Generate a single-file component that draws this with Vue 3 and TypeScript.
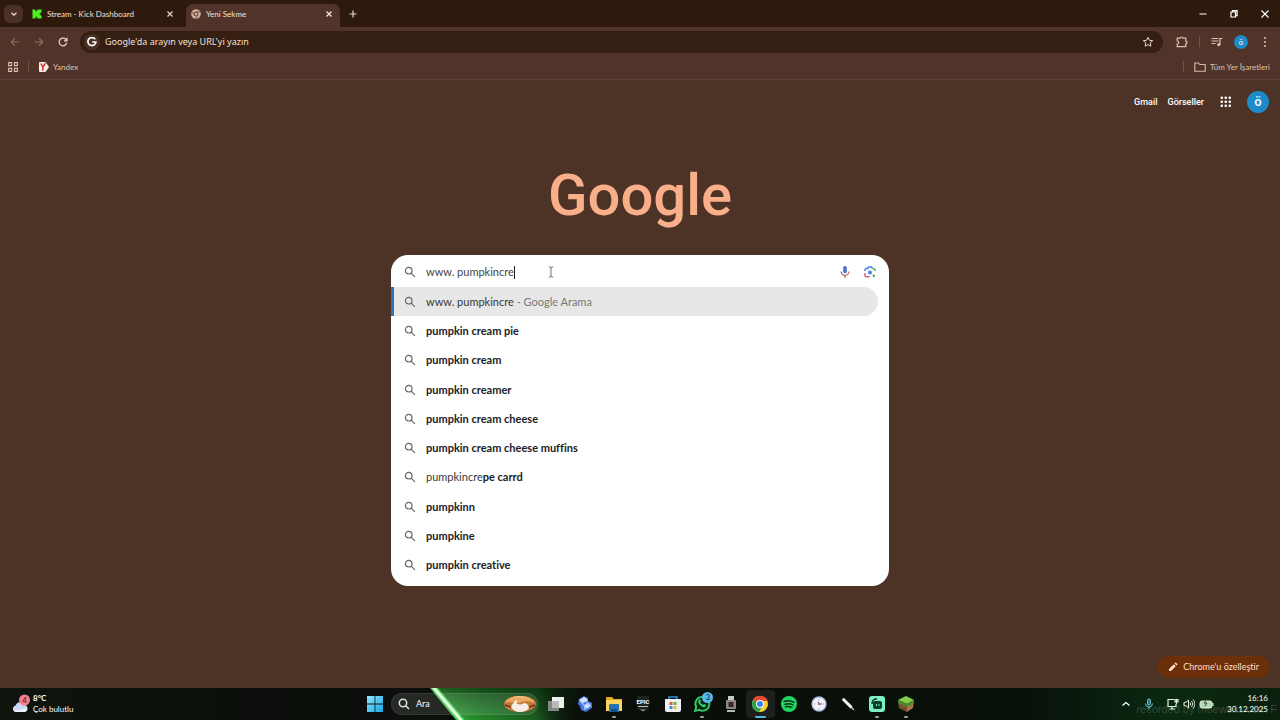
<script setup lang="ts">
import { ref } from 'vue'

interface Suggestion {
  typed: string
  completion: string
  source?: string
}

interface TaskbarApp {
  id: string
  label: string
  running?: boolean
  active?: boolean
}

const query = ref('www. pumpkincre')
const address = ref('')

const suggestions: Suggestion[] = [
  { typed: 'www. pumpkincre', completion: '', source: 'Google Arama' },
  { typed: '', completion: 'pumpkin cream pie' },
  { typed: '', completion: 'pumpkin cream' },
  { typed: '', completion: 'pumpkin creamer' },
  { typed: '', completion: 'pumpkin cream cheese' },
  { typed: '', completion: 'pumpkin cream cheese muffins' },
  { typed: 'pumpkincre', completion: 'pe carrd' },
  { typed: '', completion: 'pumpkinn' },
  { typed: '', completion: 'pumpkine' },
  { typed: '', completion: 'pumpkin creative' },
]

const apps: TaskbarApp[] = [
  { id: 'desktops', label: 'Görev Görünümü' },
  { id: 'copilot', label: 'Copilot' },
  { id: 'files', label: 'Dosya Gezgini', running: true },
  { id: 'epic', label: 'Epic Games' },
  { id: 'store', label: 'Microsoft Store' },
  { id: 'whatsapp', label: 'WhatsApp', running: true },
  { id: 'device', label: 'Aygıt' },
  { id: 'chrome', label: 'Google Chrome', active: true },
  { id: 'spotify', label: 'Spotify' },
  { id: 'clock', label: 'Saat' },
  { id: 'pen', label: 'Kalem' },
  { id: 'stream', label: 'Yayın', running: true },
  { id: 'block', label: 'Oyun', running: true },
]
</script>

<template>
  <div class="screen">
    <header class="browser">
      <div class="tabs">
        <button class="tab-search" aria-label="Sekme ara">
          <svg width="8" height="8" viewBox="0 0 8 8"><path d="M1.500 2.800 4 5.200 6.500 2.800" fill="none" stroke="#f3dccf" stroke-width="1.300" /></svg>
        </button>
        <div class="tab">
          <svg width="10" height="10" viewBox="0 0 10 10"><path d="M0.500 0.500h3v2h1v-1h1v-1h4v3h-1v1h-1v1h1v1h1v3h-4v-1h-1v-1h-1v2h-3z" fill="#4cf321" /></svg>
          <span class="tab-title">Stream - Kick Dashboard</span>
          <button class="tab-close" aria-label="Kapat">
            <svg width="8" height="8" viewBox="0 0 8 8"><path d="m1.500 1.500 5 5m0-5-5 5" stroke="#ecd6ca" stroke-width="1.200" /></svg>
          </button>
        </div>
        <div class="tab tab-active">
          <svg width="10" height="10" viewBox="0 0 10 10">
            <circle cx="5" cy="5" r="4.800" fill="#cfae9e" />
            <path d="M5 2.800h4.300M3.200 6.100 1 2.500M6.800 6.200 4.600 9.600" stroke="#503429" stroke-width=".7" />
            <circle cx="5" cy="5" r="2.300" fill="#503429" />
            <circle cx="5" cy="5" r="1.500" fill="#d8b7a7" />
          </svg>
          <span class="tab-title">Yeni Sekme</span>
          <button class="tab-close" aria-label="Kapat">
            <svg width="8" height="8" viewBox="0 0 8 8"><path d="m1.500 1.500 5 5m0-5-5 5" stroke="#f6e4da" stroke-width="1.300" /></svg>
          </button>
        </div>
        <button class="new-tab" aria-label="Yeni sekme">
          <svg width="10" height="10" viewBox="0 0 10 10"><path d="M5 1.500v7M1.500 5h7" stroke="#ecd6ca" stroke-width="1.200" /></svg>
        </button>
        <div class="window-controls">
          <button aria-label="Simge durumuna küçült"><svg width="10" height="10" viewBox="0 0 10 10"><path d="M1.500 5h7" stroke="#fff" /></svg></button>
          <button aria-label="Geri yükle"><svg width="10" height="10" viewBox="0 0 10 10"><path d="M2 3h4.500v5H2zM3.500 3V1.700h4.600v4.900H6.500" fill="none" stroke="#fff" stroke-width="1.200" /></svg></button>
          <button aria-label="Pencereyi kapat"><svg width="10" height="10" viewBox="0 0 10 10"><path d="m1.500 1.500 7 7m0-7-7 7" stroke="#fff" stroke-width="1.100" /></svg></button>
        </div>
      </div>

      <div class="toolbar">
        <button class="nav dim" aria-label="Geri"><svg width="10" height="10" viewBox="0 0 10 10"><path d="M9.300 5H1.200M5 1.200 1.200 5 5 8.800" fill="none" stroke="currentColor" stroke-width="1.100" /></svg></button>
        <button class="nav dim" aria-label="İleri"><svg width="10" height="10" viewBox="0 0 10 10"><path d="M.7 5h8.100M5 1.200 8.800 5 5 8.800" fill="none" stroke="currentColor" stroke-width="1.100" /></svg></button>
        <button class="nav" aria-label="Yenile"><svg width="10" height="10" viewBox="0 0 10 10"><path d="M8.700 5.800A3.800 3.800 0 1 1 7.600 2.200L8.800 3.500M9 .8v3H6" fill="none" stroke="currentColor" stroke-width="1.200" /></svg></button>
        <div class="omnibox">
          <span class="g-mark">
            <svg width="10" height="10" viewBox="0 0 10 10"><path d="M8.200 2.300A4 4 0 1 0 8.900 5H5.200" fill="none" stroke="#fff" stroke-width="1.700" /></svg>
          </span>
          <input v-model="address" aria-label="Adres çubuğu" placeholder="Google'da arayın veya URL'yi yazın" />
          <button class="star" aria-label="Yer işareti ekle">
            <svg width="12" height="12" viewBox="0 0 12 12"><path d="m6 1.300 1.400 3 3.300.4-2.500 2.200.7 3.300L6 8.600l-2.900 1.600.7-3.300L1.300 4.700l3.300-.4z" fill="none" stroke="#ecd6ca" stroke-width="1" /></svg>
          </button>
        </div>
        <div class="actions">
          <button aria-label="Uzantılar"><svg width="12" height="12" viewBox="0 0 12 12"><path d="M1.200 2.200h2.900a1.400 1.200 0 0 1 2.800 0h2.900v3a1.200 1.300 0 0 1 0 2.600v2.900H1.200V8a1.500 1.500 0 0 0 0-3z" fill="none" stroke="currentColor" stroke-width="1.200" /></svg></button>
          <i class="divider"></i>
          <button aria-label="Medya denetimi"><svg width="12" height="12" viewBox="0 0 12 12"><path d="M.5 2.500h7M.5 5h7M.5 7.500h4M9 8.500v-6h2.500" fill="none" stroke="currentColor" stroke-width="1.200" /><circle cx="7.800" cy="8.600" r="1.600" fill="currentColor" /></svg></button>
          <button class="avatar avatar-small" aria-label="Profil">ö</button>
          <button aria-label="Menü"><svg width="12" height="12" viewBox="0 0 12 12" fill="currentColor"><circle cx="6" cy="2" r="1" /><circle cx="6" cy="6" r="1" /><circle cx="6" cy="10" r="1" /></svg></button>
        </div>
      </div>

      <nav class="bookmarks">
        <button class="grid-button" aria-label="Sekme grupları"><svg width="10" height="10" viewBox="0 0 10 10"><path d="M.6.6h3v3h-3zM6.400.6h3v3h-3zM.6 6.400h3v3h-3zM6.400 6.400h3v3h-3z" fill="none" stroke="#d9bcae" stroke-width="1.100" /></svg></button>
        <i class="divider"></i>
        <a class="bookmark" href="#">
          <svg width="10" height="10" viewBox="0 0 10 10"><path d="M0 1q0-1 1-1h5.500L10 5l-3.500 5H1Q0 10 0 9z" fill="#f6eee9" /><path d="m1.800 1.500 2 3.500v3.800M6.300 1.200 3.800 5.500" fill="none" stroke="#dc3030" stroke-width="1.500" /></svg>
          Yandex
        </a>
        <i class="divider push"></i>
        <a class="bookmark all" href="#">
          <svg width="12" height="10" viewBox="0 0 12 10"><path d="M.8 1h3.700l1.200 1.500h5.500v6.700H.8z" fill="none" stroke="#d9bcae" stroke-width="1.100" /></svg>
          Tüm Yer İşaretleri
        </a>
      </nav>
    </header>

    <main class="page">
      <div class="account">
        <a href="#">Gmail</a>
        <a href="#">Görseller</a>
        <button class="launcher" aria-label="Google uygulamaları">
          <svg width="12" height="12" viewBox="0 0 12 12" fill="#fff"><template v-for="r in 3" :key="r"><rect v-for="c in 3" :key="c" :x="c * 4 - 3.500" :y="r * 4 - 3.500" width="2.500" height="2.500" rx="1" /></template></svg>
        </button>
        <button class="avatar avatar-large" aria-label="Google hesabı">ö</button>
      </div>

      <h1 class="logo">Google</h1>

      <form class="search-card" role="search" @submit.prevent>
        <div class="search-row">
          <svg class="lens" width="12" height="12" viewBox="0 0 12 12"><circle cx="4.700" cy="4.700" r="3.300" /><path d="m7.200 7.200 3.700 3.700" /></svg>
          <div class="field">
            <input v-model="query" type="text" aria-label="Google'da arayın" />
            <i class="caret"></i>
            <svg class="pointer" width="6" height="12" viewBox="0 0 6 12"><path d="M.8.800Q3 .8 3 2.200v7.600Q3 11.200.8 11.200M5.200.8Q3 .8 3 2.200m0 7.600q0 1.400 2.200 1.400" fill="none" stroke="#666" stroke-width=".9" /></svg>
          </div>
          <button type="button" aria-label="Sesle arama">
            <svg width="12" height="14" viewBox="0 0 12 14"><rect x="4.200" y="1" width="3.600" height="7.200" rx="1.800" fill="#4772cf" /><path d="M2.200 6.500q.2 3.800 3.800 3.800" fill="none" stroke="#a55687" stroke-width="1.200" /><path d="M9.800 6.500q-.2 3.800-3.800 3.800" fill="none" stroke="#da675c" stroke-width="1.200" /><path d="M6 10.300v2.400" stroke="#bd624c" stroke-width="1.300" /></svg>
          </button>
          <button type="button" aria-label="Görselle arama">
            <svg width="12" height="12" viewBox="0 0 12 12" fill="none" stroke-width="1.500"><path d="M1 5V4q0-1.600 1.600-1.600h1.200L4.500 1h3l.7 1.400" stroke="#4285f4" /><path d="M8.200 2.400h1.200Q11 2.400 11 4v1" stroke="#53ae71" /><path d="M1 7v2.200q0 1.600 1.600 1.600h3" stroke="#cb6177" /><circle cx="6" cy="6.500" r="2" fill="#4285d9" /><circle cx="9.800" cy="9.800" r="1.200" fill="#45a163" /></svg>
          </button>
        </div>
        <ul class="suggestions">
          <li v-for="(item, index) in suggestions" :key="index" :class="{ selected: index === 0 }">
            <svg class="lens" width="12" height="12" viewBox="0 0 12 12"><circle cx="4.700" cy="4.700" r="3.300" /><path d="m7.200 7.200 3.700 3.700" /></svg>
            <span>{{ item.typed }}<b v-if="item.completion">{{ item.completion }}</b><em v-if="item.source"> - {{ item.source }}</em></span>
          </li>
        </ul>
      </form>

      <button class="customize">
        <svg width="10" height="10" viewBox="0 0 10 10"><path d="M1 9V7l4.800-4.800 2 2L3 9zM6.500 1.500l.8-.8q.4-.3.800 0l1.200 1.200q.4.400 0 .8l-.8.800z" fill="#ffdfc9" /></svg>
        Chrome'u özelleştir
      </button>
    </main>

    <footer class="taskbar">
      <svg class="beam" width="180" height="32" viewBox="0 0 180 32" aria-hidden="true">
        <defs>
          <linearGradient id="glow"><stop offset="0" stop-color="#3fb541" /><stop offset=".3" stop-color="#248a2b" /><stop offset=".7" stop-color="#1b5c1f" /><stop offset="1" stop-color="#0b1c0c" stop-opacity="0" /></linearGradient>
          <linearGradient id="shade" x2="0" y2="1"><stop stop-color="#061a08" stop-opacity=".55" /><stop offset="1" stop-color="#061a08" stop-opacity="0" /></linearGradient>
        </defs>
        <path d="M36 0h144v32H62z" fill="url(#glow)" />
        <path d="M36 0h144v32H62z" fill="url(#shade)" />
        <path d="M30 0h8l27 32h-9z" fill="#4bc94e" />
        <path d="M32 0h4l27 32h-4z" fill="#dcffdc" />
      </svg>
      <button class="weather">
        <svg width="20" height="20" viewBox="0 0 20 20"><path d="M5 18a3.300 3.300 0 0 1-.4-6.500 4.600 4.600 0 0 1 8.500-.7A3.700 3.700 0 0 1 14 18z" fill="#cad8f5" /><path d="M2 15q2 2 6 1t8-2q0 4-3 4H5q-2 0-3-3" fill="#eef3ff" /><circle cx="13.500" cy="6" r="5.500" fill="#f27f8e" /><text x="13.500" y="9" text-anchor="middle" font-size="8" fill="#3b1018">4</text></svg>
        <span><b>8°C</b><br />Çok bulutlu</span>
      </button>

      <div class="dock">
        <button class="start" aria-label="Başlat">
          <svg width="16" height="16" viewBox="0 0 16 16"><defs><linearGradient id="win" x2="1" y2="1"><stop stop-color="#8ce6fc" /><stop offset="1" stop-color="#19a5e6" /></linearGradient></defs><path d="M0 0h7.600v7.600H0zM8.400 0H16v7.600H8.400zM0 8.400h7.600V16H0zM8.400 8.400H16V16H8.400z" fill="url(#win)" /></svg>
        </button>
        <button class="task-search">
          <svg width="12" height="12" viewBox="0 0 12 12"><circle cx="5" cy="5" r="3.700" fill="none" stroke="#dce8dc" stroke-width="1.500" /><path d="m7.700 7.700 3.300 3.300" stroke="#dce8dc" stroke-width="1.600" /></svg>
          Ara
          <svg class="bun" width="34" height="18" viewBox="0 0 34 18"><ellipse cx="17" cy="9" rx="16" ry="8" fill="#c57938" /><path d="M2 8Q5 1 17 1t15 7q-7-3-13-1-4 2-8 1-4-2-9 0z" fill="#e9a964" /><path d="M10 2q8-2 16 1-8-1-16-1" fill="#f6d2a2" /><path d="M8 12q2-5 5-4 4 3 8 0 4 0 5 5-3 4-9 4t-9-5" fill="#f5eee8" /><path d="M13 5q-3 3-1 5l2-4" fill="#fff" /><path d="m2 10 6 2m18 0 6-2" stroke="#6d321b" stroke-width="1.500" /></svg>
        </button>
        <div class="apps">
          <button v-for="app in apps" :key="app.id" :class="{ active: app.active, running: app.running }" :aria-label="app.label">
            <svg v-if="app.id === 'desktops'" width="18" height="18" viewBox="0 0 18 18"><path d="M5 2h12v11H5z" fill="#eef0ee" /><path d="M1 6h11v10H1z" fill="#858785" /><path d="M5 6h7v7H5z" fill="#b9bbb9" /></svg>
            <svg v-else-if="app.id === 'copilot'" width="18" height="18" viewBox="0 0 18 18"><path d="m3 4 5-3 4 2v3l4 2v5l-6 4-5-2-1-4-2-2z" fill="#4477e1" /><path d="m3 5 5-3 3 2v2L7 8zM8 10l5-2 2 3-5 3z" fill="#d5e4ff" /><path d="m4 6 4 4 1 5M11 4v5l3 2" fill="none" stroke="#a8c8ff" stroke-width="1.200" /></svg>
            <svg v-else-if="app.id === 'files'" width="18" height="18" viewBox="0 0 18 18"><path d="M1 2h6l2 2h8v12H1z" fill="#e8a824" /><path d="M1 5h16v11H1z" fill="#ffd45b" /><path d="M4 10q0-1 1-1h8q1 0 1 1v7H4z" fill="#2271b5" /><path d="M6 14h6v3H6z" fill="#174d80" /></svg>
            <svg v-else-if="app.id === 'epic'" width="14" height="16" viewBox="0 0 14 16"><path d="M1 0h12v13l-6 3-6-3z" fill="#202220" /><text class="epic" x="7" y="8" text-anchor="middle" fill="#fff">EPIC</text><path d="M2 10.500h10M5 13.500l2 1 2-1" fill="none" stroke="#b9bdb9" /></svg>
            <svg v-else-if="app.id === 'store'" width="18" height="18" viewBox="0 0 18 18"><path d="M5 5V2h8v3" fill="none" stroke="#3292df" stroke-width="1.500" /><path d="M1 4h16v11q0 2-2 2H3q-2 0-2-2z" fill="#edf1f3" /><path d="M5.500 7h3v3h-3z" fill="#e75535" /><path d="M9.500 7h3v3h-3z" fill="#71af38" /><path d="M5.500 11h3v3h-3z" fill="#2e9ad5" /><path d="M9.500 11h3v3h-3z" fill="#edb935" /></svg>
            <template v-else-if="app.id === 'whatsapp'">
              <svg width="18" height="18" viewBox="0 0 18 18"><path d="m2 16 1.200-4A7 7 0 1 1 6 14.900z" fill="#0d2513" stroke="#29cf66" stroke-width="1.900" /><path d="M6 5q-2 2 1 5t5 2l1-2-2-1-1 1q-2-1-3-3l1-1-1-2z" fill="#2bda6c" /></svg>
              <span class="count">3</span>
            </template>
            <svg v-else-if="app.id === 'device'" width="12" height="18" viewBox="0 0 12 18"><path d="M3 1h6v5H3z" fill="#c9c9c9" /><rect x="1" y="5" width="10" height="9" rx="1" fill="#8a8a8a" /><rect x="3.500" y="7" width="5" height="5" fill="#432421" /><path d="M2 15h8v2H2z" fill="#b5b5b5" /></svg>
            <svg v-else-if="app.id === 'chrome'" width="18" height="18" viewBox="0 0 18 18"><circle cx="9" cy="9" r="8" fill="#f9cb2d" /><path d="M9 9 2 5A8 8 0 0 1 16.500 6H9z" fill="#e94838" /><path d="M9 9 2.100 5a8 8 0 0 0 5.800 11.900l3.500-6z" fill="#27a354" /><circle cx="9" cy="9" r="4" fill="#fff" /><circle cx="9" cy="9" r="3" fill="#3c83ec" /></svg>
            <svg v-else-if="app.id === 'spotify'" width="16" height="16" viewBox="0 0 16 16"><circle cx="8" cy="8" r="8" fill="#1ed760" /><path d="M3 5.400q5.500-1.600 10 .9M4 8.200q4.500-1.200 8 .8M4.500 10.700q3.500-.8 6.300.8" fill="none" stroke="#0b2914" stroke-width="1.400" stroke-linecap="round" /></svg>
            <svg v-else-if="app.id === 'clock'" width="16" height="16" viewBox="0 0 16 16"><circle cx="8" cy="8" r="7" fill="#f0f1fa" stroke="#aab5d5" stroke-width="1.300" /><path d="M8 3v1M8 12v1M3 8h1M12 8h1" stroke="#8791ab" /><path d="M8 8h3M8 8 7 5.500" stroke="#4a5874" /><circle cx="8" cy="8" r="1" fill="#c84252" /></svg>
            <svg v-else-if="app.id === 'pen'" width="14" height="14" viewBox="0 0 14 14"><path d="m1.500 1.500 10 10 1.500 1.500" stroke="#bbb" stroke-width="1.500" /><path d="m2 2 8.500 8.500" stroke="#f4f4f4" stroke-width="3" /></svg>
            <svg v-else-if="app.id === 'stream'" width="18" height="18" viewBox="0 0 18 18"><rect x="1" y="1" width="16" height="16" rx="3" fill="#7cf0c3" /><rect x="5" y="6" width="9" height="8" rx="2" fill="#10392f" /><path d="M4 9q0-5 5-5" fill="none" stroke="#10392f" stroke-width="1.500" /><path d="M8.500 9v2M11 9v2" stroke="#7cf0c3" /></svg>
            <svg v-else width="18" height="18" viewBox="0 0 18 18"><path d="m1 5 8-4 8 4-7 4z" fill="#82ce49" /><path d="m1 5 9 4v8l-8-4z" fill="#79502f" /><path d="m10 9 7-4-1 8-6 4z" fill="#a6754a" /><path d="m1 5 9 4v3l-2-1-1 1-2-3-2 1-2-2zM10 9l7-4v3l-2 1-1 2-2-1-2 2z" fill="#4e8733" /></svg>
          </button>
        </div>
      </div>

      <span class="watermark">recorded by moewalls.com F</span>
      <div class="tray">
        <button aria-label="Gizli simgeleri göster"><svg width="10" height="10" viewBox="0 0 10 10"><path d="m1.500 6.500 3.500-3 3.500 3" fill="none" stroke="#fff" stroke-width="1.300" /></svg></button>
        <button aria-label="Mikrofon"><svg width="10" height="12" viewBox="0 0 10 12"><rect x="3.500" y="1" width="3" height="6" rx="1.500" fill="#266d82" stroke="#71c2d8" /><path d="M1.500 5.500q0 3.500 3.500 3.500t3.500-3.500M5 9v2.500" fill="none" stroke="#71c2d8" /></svg></button>
        <button class="system" aria-label="Ağ, ses ve pil">
          <svg width="12" height="12" viewBox="0 0 12 12"><path d="M7 1.500H1v7h8V6M3 11h5M5 8.500V11M9.500 1v5M8 1.500h3v2.500H8z" fill="none" stroke="#e1f0de" stroke-width="1.200" /></svg>
          <svg width="12" height="12" viewBox="0 0 12 12"><path d="M1 4.300h2L5.500 2v8L3 7.700H1zM7 4.500q1.500 1.500 0 3M8.500 3q3 3 0 6M10 1.500q4 4.500 0 9" fill="none" stroke="#e1f0de" /></svg>
          <svg width="15" height="12" viewBox="0 0 15 12"><rect x="1" y="3" width="12" height="7" rx="2" fill="#b9d9b6" stroke="#dbebd8" /><path d="M14 5v3" stroke="#f2fff0" /><path d="M8 1 5 5h3L6 8" fill="none" stroke="#2c4a2c" /></svg>
        </button>
        <button class="time">16:16<br />30.12.2025</button>
      </div>
    </footer>
  </div>
</template>

<style>
body {
  margin: 0;
  background: #4d3226;
}
</style>

<style scoped>
* {
  box-sizing: border-box;
}

.screen {
  display: flex;
  flex-direction: column;
  min-height: 100vh;
  color: #f4e2d8;
  background: #4d3226;
  font: 8px/12px Lato, "Noto Sans", sans-serif;
  font-variant-ligatures: none;
}

button {
  display: flex;
  align-items: center;
  justify-content: center;
  padding: 0;
  border: 0;
  color: inherit;
  background: none;
  font: inherit;
}

input {
  min-width: 0;
  padding: 0;
  border: 0;
  outline: 0;
  background: none;
  font: inherit;
}

a {
  color: inherit;
  text-decoration: none;
}

svg {
  display: block;
  flex: none;
}

.browser {
  border-bottom: 1px solid #5d4337;
  background: #503429;
}

.tabs {
  display: flex;
  align-items: center;
  height: 27px;
  padding-left: 4px;
  background: #2d1a0c;
}

.tab-search {
  width: 19px;
  height: 18px;
  border-radius: 6px;
  background: #4b3025;
}

.tab {
  display: flex;
  align-items: center;
  align-self: flex-end;
  gap: 5px;
  width: 154px;
  height: 23px;
  margin-left: 4px;
  padding: 0 7px 4px 5px;
}

.tab + .tab {
  margin-left: 5px;
}

.tab-active {
  border-radius: 7px 7px 0 0;
  background: #503429;
}

.tab-title {
  flex: 1;
}

.new-tab {
  width: 20px;
  height: 20px;
  margin-left: 3px;
}

.window-controls {
  display: flex;
  margin-left: auto;
}

.window-controls button {
  width: 31px;
  height: 27px;
}

.toolbar {
  display: flex;
  align-items: center;
  height: 29px;
  padding: 0 9px 0 3px;
}

.nav {
  width: 24px;
  height: 22px;
  color: #ecd3c7;
}

.dim {
  color: #917263;
}

.omnibox {
  display: flex;
  flex: 1;
  align-items: center;
  height: 22px;
  margin-left: 5px;
  padding: 0 9px 0 4px;
  border-radius: 11px;
  background: #351e12;
  font: 9px/12px "Noto Sans", sans-serif;
}

.g-mark {
  display: grid;
  place-items: center;
  width: 16px;
  height: 16px;
  margin-right: 5px;
  border-radius: 8px;
  background: #4b3227;
}

.omnibox input {
  flex: 1;
  color: #f4e2d8;
}

.omnibox input::placeholder {
  color: #f4e2d8;
  opacity: 1;
}

.actions {
  display: flex;
  align-items: center;
  gap: 11px;
  margin-left: 13px;
  color: #ddc0b1;
}

.divider {
  width: 1px;
  height: 11px;
  background: #715447;
}

.avatar {
  border-radius: 50%;
  color: #fff;
  background: #1d8bc9;
}

.avatar-small {
  width: 14px;
  height: 14px;
}

.bookmarks {
  display: flex;
  align-items: center;
  height: 23px;
  padding: 0 10px 2px 8px;
}

.bookmarks .divider {
  margin: 0 10px;
}

.bookmarks .push {
  margin-left: auto;
}

.bookmark {
  display: flex;
  align-items: center;
  gap: 4px;
  color: #dcc2b5;
}

.page {
  position: relative;
  display: flex;
  flex: 1;
  flex-direction: column;
  align-items: center;
}

.account {
  display: flex;
  align-items: center;
  align-self: flex-end;
  gap: 10px;
  padding: 11px 11px 0 0;
  color: #fff;
  font: 500 9px/22px Roboto, sans-serif;
}

.launcher {
  margin: 0 5px 0 6px;
}

.avatar-large {
  width: 22px;
  height: 22px;
  font: 600 12px/20px "Noto Sans", sans-serif;
}

.logo {
  margin: 42px 0 0;
  color: #f9b08a;
  font: 500 58px/80px Roboto, sans-serif;
}

.search-card {
  width: 498px;
  max-width: 100%;
  margin-top: 20px;
  padding-bottom: 6px;
  overflow: hidden;
  border-radius: 17px;
  color: #373737;
  background: #fff;
  font-size: 11px;
  line-height: 16px;
}

.search-row {
  display: flex;
  align-items: center;
  gap: 13px;
  height: 32px;
  padding: 2px 13px 0;
}

.lens {
  fill: none;
  stroke: #666;
  stroke-width: 1.2px;
}

.field {
  position: relative;
  display: flex;
  flex: 1;
  margin-left: -3px;
}

.field input {
  flex: 1;
  color: #444;
}

.caret {
  position: absolute;
  top: 2px;
  left: 88px;
  width: 1px;
  height: 13px;
  background: #222;
}

.pointer {
  position: absolute;
  top: 2px;
  left: 122px;
}

.suggestions {
  display: grid;
  grid-auto-rows: 1fr;
  min-height: 293px;
  margin: 0;
  padding: 0;
  list-style: none;
}

.suggestions li {
  display: flex;
  align-items: center;
  gap: 10px;
  margin-right: 11px;
  padding-left: 13px;
}

.suggestions .selected {
  padding-left: 10px;
  border-left: 3px solid #376fbf;
  border-radius: 0 15px 15px 0;
  background: #e7e7e7;
}

.suggestions b {
  color: #202124;
  font-weight: 700;
}

.suggestions em {
  color: #777;
  font-style: normal;
}

.customize {
  position: absolute;
  right: 11px;
  bottom: 10px;
  gap: 5px;
  height: 22px;
  padding: 0 10px;
  border-radius: 11px;
  color: #ffdfc9;
  background: #6b2f0a;
  font-size: 9px;
}

.taskbar {
  position: relative;
  display: grid;
  grid-template-columns: 1fr auto 1fr;
  height: 32px;
  overflow: hidden;
  color: #fff;
  background: linear-gradient(90deg, #0e150d 0, #0c0f0b 20%, #0a0e09 60%, #08110a 80%, #092a10 92%, #0a1f0d 100%);
}

.beam {
  position: absolute;
  left: 400px;
}

.weather {
  position: relative;
  justify-self: start;
  gap: 2px;
  padding-left: 11px;
  line-height: 11px;
  text-align: left;
}

.weather b {
  font-weight: 700;
}

.dock {
  position: relative;
  display: flex;
  align-items: center;
  margin-left: 4px;
}

.start {
  width: 24px;
  height: 26px;
}

.task-search {
  width: 147px;
  height: 22px;
  gap: 6px;
  margin: 0 3px 0 4px;
  padding-left: 6px;
  border: 1px solid #ffffff14;
  border-radius: 11px;
  background: #ffffff1c;
  font-size: 9px;
}

.bun {
  margin-left: auto;
}

.apps {
  display: grid;
  grid-template-columns: repeat(13, 1fr);
  width: 380px;
}

.apps button {
  position: relative;
  height: 28px;
  border-radius: 4px;
}

.epic {
  font: 700 6px/6px Roboto, sans-serif;
}

.apps .active {
  background: #ffffff14;
}

.apps .running::after,
.apps .active::after {
  position: absolute;
  bottom: 0;
  width: 4px;
  height: 2px;
  border-radius: 1px;
  background: #9c9f9b;
  content: "";
}

.apps .active::after {
  width: 11px;
  background: #4fb7e8;
}

.count {
  position: absolute;
  top: 2px;
  right: 3px;
  width: 11px;
  height: 11px;
  border-radius: 6px;
  color: #09253a;
  background: #56b9ef;
  line-height: 11px;
}

.watermark {
  position: absolute;
  right: 3px;
  bottom: 3px;
  color: #344a38;
  font: 11px/16px "Liberation Sans", sans-serif;
}

.tray {
  position: relative;
  display: flex;
  align-items: center;
  justify-self: end;
  gap: 13px;
  padding-right: 12px;
}

.system {
  gap: 4px;
}

.time {
  line-height: 11px;
  text-align: right;
}
</style>
